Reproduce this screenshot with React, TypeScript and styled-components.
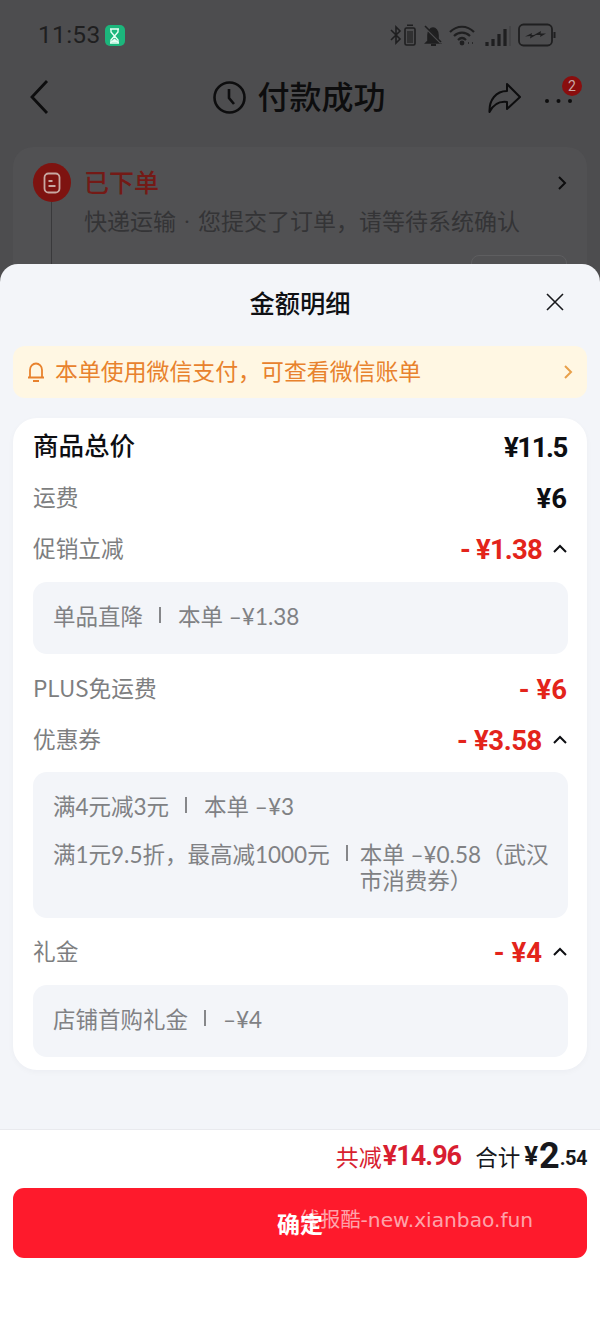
import React from "react";
import styled, { createGlobalStyle } from "styled-components";

const CJK = `"Noto Sans CJK SC", "Noto Sans", sans-serif`;
const NUM = `"Roboto", "Noto Sans CJK SC", sans-serif`;
const MIX = `"Lato", "Noto Sans CJK SC", sans-serif`;

const Global = createGlobalStyle`
  html, body { margin: 0; padding: 0; background: #fff; }
  * { box-sizing: border-box; }
  body { font-family: ${CJK}; }
`;

const Page = styled.div`
  width: 600px;
  height: 1318px;
  display: flex;
  flex-direction: column;
  overflow: hidden;
  background: #4d4d4f;
`;

/* dimmed order page behind the sheet */
const Behind = styled.div`
  height: 264px;
  flex: none;
  overflow: hidden;
`;
const StatusBar = styled.div`
  height: 62px;
  padding: 20px 44px 0 38px;
  display: flex;
  align-items: flex-start;
  justify-content: space-between;
`;
const Clock = styled.div`
  display: flex;
  align-items: center;
  gap: 4px;
  height: 30px;
  font: 400 24.5px/30px "Roboto", sans-serif;
  letter-spacing: 0.3px;
  color: #1f1f20;
`;
const TimerBadge = styled.span`
  width: 20px;
  height: 21px;
  margin-top: 1px;
  border-radius: 5px;
  background: #1cb67c;
  display: flex;
  align-items: center;
  justify-content: center;
`;
const StatusIcons = styled.div`
  height: 30px;
  display: flex;
  align-items: center;
  color: #1f1f20;
`;
const Nav = styled.div`
  height: 70px;
  padding: 0 28px 0 29px;
  display: grid;
  grid-template-columns: 1fr auto 1fr;
  align-items: center;
`;
const NavTitle = styled.div`
  display: flex;
  align-items: center;
  gap: 11px;
  font: 500 32px/44px ${CJK};
  color: #0d0d0e;
  margin-left: -2px;
`;
const TitleText = styled.span`
  padding-bottom: 4px;
`;
const NavActions = styled.div`
  display: flex;
  justify-content: flex-end;
  align-items: center;
  gap: 24px;
`;
const More = styled.div`
  position: relative;
  width: 27px;
  height: 30px;
  display: flex;
`;
const Badge = styled.span`
  position: absolute;
  top: -6px;
  right: -10px;
  width: 20px;
  height: 20px;
  border-radius: 50%;
  background: #8a0e0e;
  color: #c9a9a6;
  font: 400 14px/20px "Roboto", sans-serif;
  text-align: center;
`;
const OrderCard = styled.div`
  margin: 15px 13px 0;
  height: 200px;
  border-radius: 20px;
  background: #515153;
  padding: 16px 20px 0;
  position: relative;
`;
const OrderHead = styled.div`
  display: flex;
  align-items: center;
  gap: 13px;
  height: 39px;
`;
const OrderDot = styled.span`
  width: 38px;
  height: 39px;
  border-radius: 50%;
  background: #7e1310;
  display: flex;
  align-items: center;
  justify-content: center;
`;
const OrderTitle = styled.span`
  flex: 1;
  font: 500 25px/36px ${CJK};
  color: #741a16;
  padding-bottom: 4px;
`;
const OrderBody = styled.div`
  margin-left: 18px;
  padding-left: 32px;
  border-left: 1px solid #39393b;
  height: 80px;
  font: 400 23px/36px ${CJK};
  color: #343436;
  white-space: nowrap;
`;
const Mid = styled.span`
  font-family: "Roboto", sans-serif;
  margin: 0 8px;
`;
const Ghost = styled.span`
  position: absolute;
  top: 108px;
  right: 20px;
  width: 96px;
  height: 40px;
  border: 1px solid #5e5e60;
  border-radius: 8px;
`;

/* sheet */
const Sheet = styled.div`
  flex: 1;
  display: flex;
  flex-direction: column;
  background: #f3f5f9;
  border-radius: 18px 18px 0 0;
`;
const SheetHead = styled.div`
  height: 82px;
  padding: 0 36px 6px 0;
  display: grid;
  grid-template-columns: 1fr auto 1fr;
  align-items: center;
`;
const SheetTitle = styled.div`
  font: 500 25.3px/34px ${CJK};
  color: #0f1014;
  grid-column: 2;
  margin-left: 36px;
`;
const CloseWrap = styled.div`
  display: flex;
  justify-content: flex-end;
`;
const Notice = styled.div`
  margin: 0 13px;
  height: 52px;
  padding: 0 14px;
  border-radius: 12px;
  background: #fff7e3;
  display: flex;
  align-items: center;
  color: #e8822d;
  font: 400 22.9px/32px ${CJK};
`;
const NoticeText = styled.span`
  flex: 1;
  margin-left: 10px;
  padding-bottom: 5px;
`;
const Card = styled.div`
  margin: 20px 13px 0;
  padding: 3px 19px 13px 20px;
  background: #fff;
  border-radius: 24px;
  box-shadow: 0 2px 6px rgba(30, 40, 70, 0.03);
`;
const Row = styled.div`
  height: 51px;
  padding-right: 1px;
  display: flex;
  align-items: center;
  justify-content: space-between;
`;
const Label = styled.span<{ $strong?: boolean }>`
  font: ${(p) => (p.$strong ? "500 25.5px/36px" : "400 22.7px/34px")} ${CJK};
  color: ${(p) => (p.$strong ? "#0d0e12" : "#7d7e80")};
  padding-bottom: ${(p) => (p.$strong ? "6px" : "1px")};
`;
const Value = styled.span`
  display: flex;
  align-items: center;
  gap: 11px;
`;
const Amount = styled.span<{ $red?: boolean; $track?: number }>`
  font: 700 27.5px/34px ${NUM};
  letter-spacing: ${(p) => p.$track ?? 0}px;
  color: ${(p) => (p.$red ? "#e3241b" : "#0d0e12")};
  white-space: pre;
  padding-top: 2px;
`;
const Detail = styled.div<{ $mt?: number; $mb?: number }>`
  margin: ${(p) => p.$mt ?? 8}px 0 ${(p) => p.$mb ?? 8}px;
  padding: 22px 16px 24px 20px;
  background: #f3f5f9;
  border-radius: 14px;
  display: flex;
  flex-direction: column;
  gap: 22px;
  color: #808184;
  font: 400 22.5px/26px ${MIX};
`;
const Line = styled.div`
  display: flex;
  align-items: flex-start;
`;
const Divider = styled.span<{ $tight?: boolean }>`
  flex: none;
  width: 2px;
  height: 16px;
  margin: 3px ${(p) => (p.$tight ? "12px" : "17px")} 0 16px;
  background: #86878a;
`;
const LineValue = styled.span`
  flex: 1;
`;
const Spacer = styled.div`
  flex: 1;
`;

/* footer */
const Footer = styled.div`
  height: 189px;
  flex: none;
  background: #fff;
  border-top: 1px solid #e9eaee;
  padding: 0 13px;
`;
const Totals = styled.div`
  height: 58px;
  padding: 0 0 6px;
  display: flex;
  align-items: center;
  justify-content: flex-end;
`;
const SaveText = styled.span`
  font: 400 23px/32px ${CJK};
  color: #d81e30;
`;
const SaveAmount = styled.span`
  font: 700 27px/34px ${NUM};
  letter-spacing: -1px;
  color: #d81e30;
  margin: 0 14px 0 1px;
`;
const SumText = styled.span`
  font: 400 22.5px/32px ${CJK};
  color: #17181c;
  margin-right: 4px;
`;
const SumYen = styled.span`
  font: 700 26px/34px ${NUM};
  color: #17181c;
  margin-right: 1px;
`;
const SumBig = styled.span`
  font: 700 36px/34px ${NUM};
  color: #17181c;
`;
const SumSmall = styled.span`
  font: 700 20px/34px ${NUM};
  letter-spacing: -0.5px;
  color: #17181c;
  padding-top: 3px;
`;
const Confirm = styled.div`
  position: relative;
  height: 70px;
  border-radius: 11px;
  background: #fe1a2c;
  display: flex;
  align-items: center;
  justify-content: center;
  color: #fff;
  font: 700 23px/32px ${CJK};
`;
const Watermark = styled.span`
  position: absolute;
  left: 287px;
  top: 16px;
  color: rgba(255, 255, 255, 0.62);
  font: 400 20.2px/32px "DejaVu Sans", ${CJK};
  white-space: nowrap;
`;

const Up = () => (
  <svg width="14" height="9" viewBox="0 0 14 9" fill="none" stroke="#0d0e12" strokeWidth="2">
    <path d="M1 8l6-6 6 6" />
  </svg>
);

export default function App() {
  return (
    <Page>
      <Global />
      <Behind>
        <StatusBar>
          <Clock>
            11:53
            <TimerBadge>
              <svg width="11" height="16" viewBox="0 0 11 16" fill="none" stroke="#e8fff5" strokeWidth="1.4">
                <path d="M1 1h9M1 15h9M2 1v3l3.5 4L2 12v3M9 1v3L5.5 8 9 12v3" />
                <path d="M3 13.5l2.5-2 2.5 2z" fill="#e8fff5" />
              </svg>
            </TimerBadge>
          </Clock>
          <StatusIcons>
            <svg width="128" height="26" viewBox="0 0 128 26" fill="none" stroke="#1f1f20" strokeWidth="1.6">
              <path d="M1 8l9 9-4 4V5l4 4-9 9" />
              <rect x="15" y="6" width="10" height="17" rx="1.5" />
              <rect x="17" y="2.5" width="6" height="1.5" fill="#1f1f20" stroke="none" />
              <rect x="17" y="9" width="6" height="12" fill="#1f1f20" stroke="none" opacity=".6" />
              <path d="M38 19v-6c0-4 2.500-7 5-7s5 3 5 7v6l2 2H36z" fill="#1f1f20" />
              <path d="M35 5l16 16" stroke="#4d4d4f" strokeWidth="2.400" />
              <path d="M35 4l16 16" />
              <path d="M41 23h5" strokeWidth="2" />
              <path d="M60 10c7-7 17-7 24 0M64 14c4.500-4.500 11.500-4.500 16 0M68 18c2.500-2.500 5.500-2.500 8 0" strokeWidth="2.200" />
              <circle cx="72" cy="21" r="2.400" fill="#1f1f20" stroke="none" />
              <path d="M78 21h1M82 21h1" strokeWidth="1.500" />
              <path d="M97 20v4M103 17v7M109 12v12M115 7v17" strokeWidth="3.200" />
              <path d="M120 4v20" stroke="#3d3d3f" strokeWidth="1" />
            </svg>
            <svg width="38" height="24" viewBox="0 0 38 24" fill="none" stroke="#1f1f20" strokeWidth="1.800">
              <rect x="1" y="1.500" width="33" height="21" rx="4.500" />
              <path d="M36.500 9v6" strokeWidth="2" />
              <path d="M7 13.500l7-3.500-.5 2H18l-6 3.500.5-2.500zM16 12l7-4-.5 2.500H28l-6 3.500.5-2z" fill="#1f1f20" stroke="none" />
            </svg>
          </StatusIcons>
        </StatusBar>
        <Nav>
          <svg width="20" height="36" viewBox="0 0 20 36" fill="none" stroke="#0d0d0e" strokeWidth="2.800">
            <path d="M18 2L3 18l15 16" />
          </svg>
          <NavTitle>
            <svg width="33" height="33" viewBox="0 0 33 33" fill="none" stroke="#0d0d0e" strokeWidth="2.600">
              <circle cx="16.500" cy="16.500" r="15" />
              <path d="M16 8v9l5 6" />
            </svg>
            <TitleText>付款成功</TitleText>
          </NavTitle>
          <NavActions>
            <svg width="33" height="31" viewBox="0 0 33 31" fill="none" stroke="#0d0d0e" strokeWidth="2">
              <path d="M19 2l13 13-13 12v-7C11 19 5 23 1.500 30 1 18 8 9 19 9z" strokeLinejoin="round" />
            </svg>
            <More>
              <svg width="27" height="30" viewBox="0 0 27 30" fill="#0d0d0e">
                <circle cx="2" cy="19" r="2" />
                <circle cx="13.500" cy="19" r="2" />
                <circle cx="25" cy="19" r="2" />
              </svg>
              <Badge>2</Badge>
            </More>
          </NavActions>
        </Nav>
        <OrderCard>
          <OrderHead>
            <OrderDot>
              <svg width="18" height="22" viewBox="0 0 18 22" fill="none" stroke="#c8a8a2" strokeWidth="1.800">
                <rect x="1.500" y="1.500" width="15" height="19" rx="4" />
                <path d="M5.500 9h4M5.500 14h7" />
              </svg>
            </OrderDot>
            <OrderTitle>已下单</OrderTitle>
            <svg width="10" height="16" viewBox="0 0 10 16" fill="none" stroke="#0d0d0e" strokeWidth="2">
              <path d="M2 2l6 6-6 6" />
            </svg>
          </OrderHead>
          <OrderBody>
            快递运输<Mid>·</Mid>您提交了订单，请等待系统确认
          </OrderBody>
          <Ghost />
        </OrderCard>
      </Behind>
      <Sheet>
        <SheetHead>
          <SheetTitle>金额明细</SheetTitle>
          <CloseWrap>
            <svg width="18" height="18" viewBox="0 0 18 18" fill="none" stroke="#17181c" strokeWidth="1.600">
              <path d="M1 1l16 16M17 1L1 17" />
            </svg>
          </CloseWrap>
        </SheetHead>
        <Notice>
          <svg width="18" height="22" viewBox="0 0 18 22" fill="none" stroke="#e8822d" strokeWidth="1.800">
            <path d="M3 16V9c0-3.500 2.700-6.500 6-6.500s6 3 6 6.500v7M1 16.500h16M6 20h6" />
          </svg>
          <NoticeText>本单使用微信支付，可查看微信账单</NoticeText>
          <svg width="10" height="16" viewBox="0 0 10 16" fill="none" stroke="#e8a04a" strokeWidth="2">
            <path d="M2 2l6 6-6 6" />
          </svg>
        </Notice>
        <Card>
          <Row>
            <Label $strong>商品总价</Label>
            <Amount $track={-1.4}>¥11.5</Amount>
          </Row>
          <Row>
            <Label>运费</Label>
            <Amount>¥6</Amount>
          </Row>
          <Row>
            <Label>促销立减</Label>
            <Value>
              <Amount $red $track={-0.8}>- ¥1.38</Amount>
              <Up />
            </Value>
          </Row>
          <Detail $mb={9}>
            <Line>
              <span>单品直降</span>
              <Divider />
              <span>本单 –¥1.38</span>
            </Line>
          </Detail>
          <Row>
            <Label>PLUS免运费</Label>
            <Amount $red>- ¥6</Amount>
          </Row>
          <Row>
            <Label>优惠券</Label>
            <Value>
              <Amount $red $track={-0.4}>- ¥3.58</Amount>
              <Up />
            </Value>
          </Row>
          <Detail $mt={7}>
            <Line>
              <span>满4元减3元</span>
              <Divider />
              <span>本单 –¥3</span>
            </Line>
            <Line>
              <span>满1元9.5折，最高减1000元</span>
              <Divider $tight />
              <LineValue>本单 –¥0.58（武汉市消费券）</LineValue>
            </Line>
          </Detail>
          <Row>
            <Label>礼金</Label>
            <Value>
              <Amount $red>- ¥4</Amount>
              <Up />
            </Value>
          </Row>
          <Detail $mb={0}>
            <Line>
              <span>店铺首购礼金</span>
              <Divider />
              <span>–¥4</span>
            </Line>
          </Detail>
        </Card>
        <Spacer />
        <Footer>
          <Totals>
            <SaveText>共减</SaveText>
            <SaveAmount>¥14.96</SaveAmount>
            <SumText>合计</SumText>
            <SumYen>¥</SumYen>
            <SumBig>2</SumBig>
            <SumSmall>.54</SumSmall>
          </Totals>
          <Confirm>
            确定
            <Watermark>线报酷-new.xianbao.fun</Watermark>
          </Confirm>
        </Footer>
      </Sheet>
    </Page>
  );
}
